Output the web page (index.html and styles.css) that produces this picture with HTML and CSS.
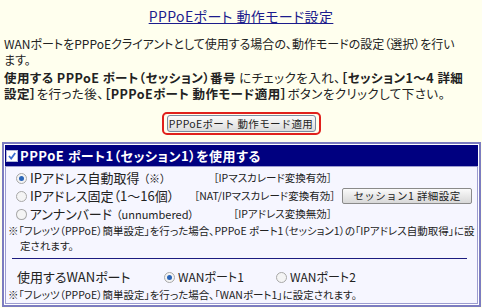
FILE: index.html
```html
<!DOCTYPE html>
<html lang="ja">
<head>
  <meta charset="UTF-8">
  <title>PPPoEポート 動作モード設定</title>
  <link rel="stylesheet" href="styles.css">
</head>
<body>

  <!-- Title -->
  <div class="page-title"><a href="#">PPPoEポート 動作モード設定</a></div>

  <!-- Description -->
  <p class="desc">WANポートをPPPoEクライアントとして使用する場合の、動作モードの設定（選択）を行い<br>ます。</p>
  <p class="guide"><b>使用する PPPoE ポート（セッション）番号</b> にチェックを入れ、<b>［セッション1～4 詳細<br>設定］</b>を行った後、<b>［PPPoEポート 動作モード適用］</b>ボタンをクリックして下さい。</p>

  <!-- Apply button -->
  <div class="apply-area">
    <div class="apply-ring">
      <button class="apply-btn">PPPoEポート 動作モード適用</button>
    </div>
  </div>

  <!-- Port 1 panel -->
  <div class="panel">
    <div class="panel-head">
      <span class="check">
        <svg width="10" height="10" viewBox="0 0 10 10"><path d="M2 5 L4.2 7.5 L8.2 2" fill="none" stroke="#3a6fd0" stroke-width="1.8"/></svg>
      </span>
      PPPoE ポート1（セッション1）を使用する
    </div>
    <div class="panel-body">
      <div class="mode-row">
        <label class="opt"><span class="radio on"></span>IPアドレス自動取得 <small>（※）</small></label>
        <span class="mode-note">［IPマスカレード変換有効］</span>
        <span></span>
      </div>
      <div class="mode-row">
        <label class="opt"><span class="radio"></span>IPアドレス固定（1～16個）</label>
        <span class="mode-note">［NAT/IPマスカレード変換有効］</span>
        <button class="detail-btn">セッション1 詳細設定</button>
      </div>
      <div class="mode-row">
        <label class="opt"><span class="radio"></span>アンナンバード<small>（unnumbered）</small></label>
        <span class="mode-note">［IPアドレス変換無効］</span>
        <span></span>
      </div>
      <p class="note hang">※「フレッツ（PPPoE）簡単設定」を行った場合、PPPoE ポート1（セッション1）の「IPアドレス自動取得」に設<br>定されます。</p>

      <div class="divider"></div>

      <div class="wan-row">
        <span class="wan-label">使用するWANポート</span>
        <label class="wan-opt"><span class="radio on"></span>WANポート1</label>
        <label class="wan-opt"><span class="radio"></span>WANポート2</label>
      </div>
      <p class="note">※「フレッツ（PPPoE）簡単設定」を行った場合、「WANポート1」に設定されます。</p>
    </div>
  </div>

</body>
</html>
```

FILE: styles.css
```css
body {
  margin: 0;
  background: #ffffee;
  color: #222;
  font-family: "Noto Sans CJK JP", "Liberation Sans", sans-serif;
  font-feature-settings: "palt";
  font-size: 12px;
  line-height: 16px;
}

/* Title */
.page-title {
  text-align: center;
  padding-top: 7px;
  height: 21px;
  font-size: 14px;
  line-height: 18px;
  letter-spacing: 0.4px;
}

.page-title a {
  color: #1c1c8c;
  text-decoration: underline;
}

/* Description */
.desc {
  margin: 8px 0 0 4px;
  line-height: 16px;
  white-space: nowrap;
}

.guide {
  margin: 2px 0 0 4px;
  font-size: 12.5px;
  line-height: 16px;
  white-space: nowrap;
  letter-spacing: 0.45px;
}

.guide b {
  font-weight: bold;
}

/* Apply button */
.apply-area {
  display: flex;
  justify-content: center;
  margin-top: 10px;
}

.apply-ring {
  border: 2px solid #e0201c;
  border-radius: 5px;
  padding: 1px 3px;
}

.apply-btn {
  display: block;
  width: 149px;
  height: 17px;
  padding: 0;
  border: 1px solid #7a8aa0;
  border-radius: 3px;
  background: linear-gradient(#fbfbfb, #dcdcdc);
  font-family: inherit;
  font-size: 10.5px;
  letter-spacing: 0.3px;
  color: #222;
  line-height: 15px;
  white-space: nowrap;
}

/* Panel */
.panel {
  margin: 7px 1px 0 2px;
  border: 2px solid #7c7cc0;
  padding: 1px;
  background: #fff;
}

.panel-head {
  display: flex;
  align-items: center;
  gap: 2px;
  height: 21px;
  padding-left: 1px;
  background: #000080;
  color: #fff;
  font-size: 13px;
  font-weight: bold;
  letter-spacing: 0.5px;
}

.check {
  display: flex;
  width: 10px;
  height: 10px;
  background: #fff;
  border: 1px solid #b0b8d8;
}

.panel-body {
  border: 1px solid #9c9cd0;
  background: #f6f6ff;
  padding: 2px 0 1px 0;
}

/* Mode rows */
.mode-row {
  display: grid;
  grid-template-columns: 178px 138px 140px;
  align-items: center;
  height: 18px;
  padding-left: 10px;
}

.opt {
  display: flex;
  align-items: center;
  gap: 2px;
  font-size: 13px;
  line-height: 18px;
  white-space: nowrap;
}

.opt small {
  font-size: 11px;
  margin-left: 2px;
}

.mode-note {
  text-align: right;
  font-size: 10.5px;
  line-height: 18px;
  white-space: nowrap;
}

.detail-btn {
  width: 130px;
  height: 16px;
  margin-left: 10px;
  padding: 0;
  border: 1px solid #8a8a8a;
  border-radius: 2px;
  background: linear-gradient(#fafafa, #d8d8d8);
  font-family: inherit;
  font-size: 10.5px;
  letter-spacing: 0.4px;
  color: #222;
  line-height: 14px;
  white-space: nowrap;
}

/* Radios */
.radio {
  display: inline-block;
  width: 9px;
  height: 9px;
  border: 1px solid #a8a8a8;
  border-radius: 50%;
  background: #f4f4f4;
  margin-right: 1px;
  position: relative;
}

.radio.on::after {
  content: "";
  position: absolute;
  left: 2px;
  top: 2px;
  width: 5px;
  height: 5px;
  border-radius: 50%;
  background: #2a64b8;
}

/* Notes */
.note {
  margin: 0 0 0 2px;
  font-size: 10.5px;
  line-height: 15px;
  white-space: nowrap;
}

.note.hang {
  padding-left: 12px;
  text-indent: -12px;
}

.divider {
  margin: 5px 10px 0 6px;
  border-top: 1px solid #1c1c80;
}

/* WAN port */
.wan-row {
  display: flex;
  align-items: center;
  height: 20px;
  margin-top: 8px;
  padding-left: 11px;
}

.wan-label {
  width: 147px;
  font-size: 13px;
}

.wan-opt {
  display: flex;
  align-items: center;
  gap: 2px;
  width: 112px;
  font-size: 12px;
}
```
